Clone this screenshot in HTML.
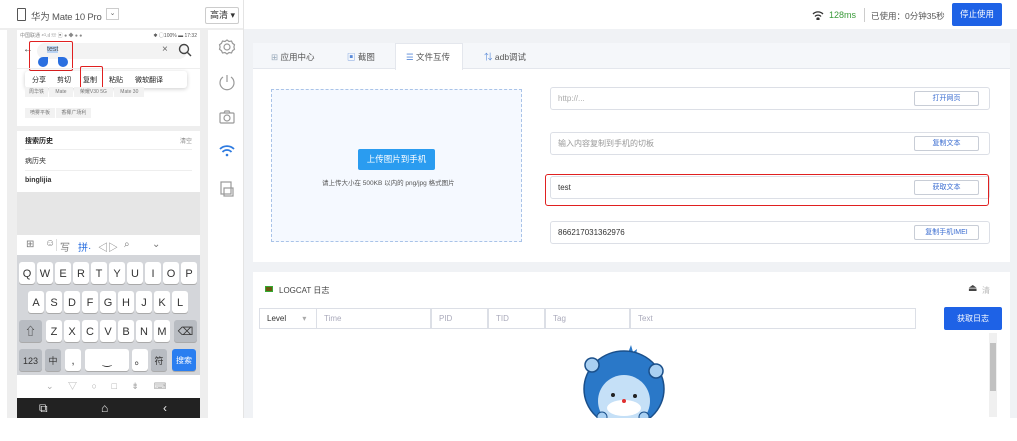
<!DOCTYPE html>
<html><head><meta charset="utf-8"><style>
*{margin:0;padding:0;box-sizing:border-box}
body{width:1017px;height:441px;background:#fff;font-family:"Liberation Sans","Noto Sans CJK SC",sans-serif;position:relative;overflow:hidden;font-size:9px;color:#333}
.a{position:absolute}
.k{position:absolute;background:#fff;border-radius:3px;width:16px;height:22px;text-align:center;line-height:24px;font-size:11px;color:#333;box-shadow:0 1px 0 #aaa}
.kg{background:#b8bcc2}
.inp{position:absolute;left:550px;width:440px;height:23px;border:1px solid #dcdfe6;border-radius:3px;background:#fff;font-size:8px;line-height:21px;padding-left:7px;color:#333}
.inp .b{position:absolute;right:10px;top:3px;width:65px;height:15px;border:1px solid #c8cdd6;border-radius:2px;text-align:center;line-height:13px;font-size:7px;color:#3a6cd0}
.f{position:absolute;top:308px;height:21px;border:1px solid #dcdfe6;background:#fff;font-size:8px;line-height:19px;padding-left:7px;color:#aab}
.m{position:absolute;top:4px;font-size:7px;color:#222}
.t{position:absolute;top:209px;font-size:10px;color:#777}
</style></head><body>
<!-- left header -->
<div class="a" style="left:17px;top:8px;width:9px;height:13px;border:1.5px solid #555;border-radius:1px"></div>
<div class="a" style="left:31px;top:9px;font-size:9.5px;color:#555;letter-spacing:-0.2px">华为 Mate 10 Pro</div>
<div class="a" style="left:106px;top:8px;width:13px;height:12px;border:1px solid #ccc;font-size:7px;text-align:center;line-height:10px;color:#666">⌄</div>
<div class="a" style="left:205px;top:7px;width:34px;height:17px;border:1px solid #ccc;border-radius:2px;font-size:9px;line-height:15px;padding-left:4px;color:#333">高清 ▾</div>
<div class="a" style="left:0;top:28px;width:243px;height:2px;background:#eee"></div>
<div class="a" style="left:7px;top:30px;width:201px;height:388px;background:#eeeeee"></div>
<div class="a" style="left:243px;top:0;width:1px;height:418px;background:#e4e4e4"></div>
<!-- icon column -->
<svg class="a" style="left:218px;top:38px" width="18" height="170" viewBox="0 0 18 170" fill="none" stroke="#999" stroke-width="1.2">
<circle cx="9" cy="9" r="3"/><path d="M9 2l2 1.5 2.5-.5 1 2.3 2 1.4-.6 2.3.6 2.3-2 1.4-1 2.3-2.5-.5L9 16l-2-1.5-2.5.5-1-2.3-2-1.4.6-2.3-.6-2.3 2-1.4 1-2.3 2.5.5z"/>
<path d="M9 37v7M5 39a7 7 0 1 0 8 0"/>
<rect x="2" y="75" width="14" height="10" rx="1"/><circle cx="9" cy="80" r="3"/><path d="M6 75l1-2h4l1 2"/>
<path d="M2 111a10 10 0 0 1 14 0M4.5 114a6 6 0 0 1 9 0" stroke="#2f7be0" stroke-width="1.8"/><circle cx="9" cy="117" r="1.3" fill="#2f7be0" stroke="none"/>
<rect x="3" y="144" width="10" height="12"/><rect x="6" y="150" width="9" height="8"/>
</svg>
<!-- phone -->
<div class="a" style="left:17px;top:30px;width:183px;height:388px;background:#fff;overflow:hidden">
 <div class="a" style="left:3px;top:2px;font-size:5px;color:#888">中国联通 ⁴ᴳ.ıl ☏ ▣ ● ◆ ● ●</div>
 <div class="a" style="right:3px;top:2px;font-size:5px;color:#555">✱ ◯100% ▬ 17:32</div>
 <div class="a" style="left:6px;top:14px;font-size:10px;color:#444">←</div>
 <div class="a" style="left:20px;top:13px;width:150px;height:16px;background:#f3f3f3;border-radius:8px"></div>
 <div class="a" style="left:30px;top:16px;font-size:7px;color:#555;background:#b9d3f3">test</div>
 <div class="a" style="left:145px;top:14px;font-size:10px;color:#666">×</div>
 <svg class="a" style="left:161px;top:13px" width="14" height="14" fill="none" stroke="#444" stroke-width="1.4"><circle cx="6" cy="6" r="4.5"/><path d="M9.5 9.5l3.5 3.5"/></svg>
 <div class="a" style="left:21px;top:27px;width:10px;height:10px;background:#2a6fe0;border-radius:5px 0 5px 5px"></div>
 <div class="a" style="left:41px;top:27px;width:10px;height:10px;background:#2a6fe0;border-radius:0 5px 5px 5px"></div>
 <div class="a" style="left:12px;top:11px;width:44px;height:30px;border:1.5px solid #e02020;border-radius:2px"></div>
 <div class="a" style="left:0;top:38px;width:183px;height:1px;background:#eee"></div>
 <div class="a" style="left:8px;top:41px;width:162px;height:17px;background:#fff;box-shadow:0 1px 4px rgba(0,0,0,.2);border-radius:3px">
  <span class="m" style="left:7px">分享</span><span class="m" style="left:32px">剪切</span><span class="m" style="left:58px">复制</span><span class="m" style="left:84px">粘贴</span><span class="m" style="left:110px">微软翻译</span>
 </div>
 <div class="a" style="left:63px;top:36px;width:23px;height:26px;border:1.5px solid #e02020;border-radius:2px"></div>
 <div class="a" style="left:8px;top:58px;font-size:5px;color:#777"><span style="background:#f2f2f2;padding:2px 4px">周华铁</span> <span style="background:#f2f2f2;padding:2px 6px">Mate</span> <span style="background:#f2f2f2;padding:2px 6px">荣耀V30 5G</span> <span style="background:#f2f2f2;padding:2px 6px">Mate 30</span></div>
 <div class="a" style="left:8px;top:79px;font-size:5px;color:#777"><span style="background:#f2f2f2;padding:2px 5px">喷雾平板</span> <span style="background:#f2f2f2;padding:2px 5px">香椰广场利</span></div>
 <div class="a" style="left:0;top:96px;width:183px;height:5px;background:#eee"></div>
 <div class="a" style="left:8px;top:106px;font-size:7px;font-weight:bold;color:#222">搜索历史</div>
 <div class="a" style="right:8px;top:106px;font-size:6px;color:#888">清空</div>
 <div class="a" style="left:8px;top:119px;width:167px;height:1px;background:#eee"></div>
 <div class="a" style="left:8px;top:126px;font-size:7px;color:#333">病历夹</div>
 <div class="a" style="left:8px;top:140px;width:167px;height:1px;background:#eee"></div>
 <div class="a" style="left:8px;top:147px;font-size:7px;font-weight:bold;color:#333">binglijia</div>
 <div class="a" style="left:0;top:162px;width:183px;height:43px;background:#e6e6e6"></div>
 <div class="a" style="left:0;top:205px;width:183px;height:20px;background:#fff"></div>
 <span class="t" style="left:9px">⊞</span><span class="t" style="left:28px;top:208px">☺</span><span class="t" style="left:43px">写</span><span class="t" style="left:61px;color:#2a6fe0">拼·</span><span class="t" style="left:81px">◁▷</span><span class="t" style="left:107px">⌕</span><span class="t" style="left:135px">⌄</span>
 <div class="a" style="left:39px;top:209px;width:1px;height:12px;background:#ddd"></div>
 <div class="a" style="left:0;top:225px;width:183px;height:120px;background:#d4d6da"></div>
 <div class="a" style="left:0;top:345px;width:183px;height:23px;background:#fff;font-size:9px;color:#aaa;line-height:23px;word-spacing:12px">&nbsp;&nbsp;⌄ ▽ ○ □ ⇟ ⌨</div>
 <div class="a" style="left:0;top:368px;width:183px;height:20px;background:#222;color:#eee;font-size:12px;line-height:20px"><span class="a" style="left:22px">⧉</span><span class="a" style="left:84px">⌂</span><span class="a" style="left:146px">‹</span></div>
</div>
<!-- right top bar -->
<svg class="a" style="left:812px;top:10px" width="12" height="10" fill="none" stroke="#333" stroke-width="1.3"><path d="M1 4a7 7 0 0 1 10 0M3 6.5a4 4 0 0 1 6 0"/><circle cx="6" cy="9" r="1" fill="#333"/></svg>
<div class="a" style="left:829px;top:10px;font-size:9px;color:#3a9a3a">128ms</div>
<div class="a" style="left:864px;top:8px;width:1px;height:14px;background:#ccc"></div>
<div class="a" style="left:871px;top:10px;font-size:8.5px;color:#555">已使用：0分钟35秒</div>
<div class="a" style="left:952px;top:3px;width:50px;height:23px;background:#1e62e6;border-radius:2px;color:#fff;font-size:8.5px;line-height:23px;text-align:center">停止使用</div>
<div class="a" style="left:244px;top:29px;width:773px;height:389px;background:#f0f2f5"></div>
<!-- top card -->
<div class="a" style="left:253px;top:43px;width:757px;height:219px;background:#fff"></div>
<div class="a" style="left:253px;top:43px;width:757px;height:26px;background:#f5f7fa;border-bottom:1px solid #e4e7ed"></div>
<div class="a" style="left:395px;top:43px;width:68px;height:27px;background:#fff;border:1px solid #e4e7ed;border-bottom:none"></div>
<div class="a" style="left:271px;top:51px;font-size:8.5px;color:#555"><span style="color:#9ab">⊞</span> 应用中心</div>
<div class="a" style="left:347px;top:51px;font-size:8.5px;color:#555"><span style="color:#5a8ad8">▣</span> 截图</div>
<div class="a" style="left:406px;top:51px;font-size:8.5px;color:#555"><span style="color:#5a8ad8">☰</span> 文件互传</div>
<div class="a" style="left:484px;top:51px;font-size:8.5px;color:#555"><span style="color:#5a8ad8">⇅</span> adb调试</div>
<div class="a" style="left:271px;top:89px;width:251px;height:153px;border:1px dashed #a9c3e8;background:#f5f9ff"></div>
<div class="a" style="left:358px;top:149px;width:77px;height:21px;background:#2a9cf0;border-radius:2px;color:#fff;font-size:8.5px;line-height:21px;text-align:center">上传图片到手机</div>
<div class="a" style="left:322px;top:177px;font-size:6.5px;color:#555">请上传大小在 500KB 以内的 png/jpg 格式图片</div>
<div class="inp" style="top:87px;color:#aaa">http://...<div class="b">打开网页</div></div>
<div class="inp" style="top:132px;color:#999">输入内容复制到手机的切板<div class="b">复制文本</div></div>
<div class="inp" style="top:176px">test<div class="b">获取文本</div></div>
<div class="a" style="left:545px;top:174px;width:444px;height:32px;border:1.5px solid #e02020;border-radius:3px"></div>
<div class="inp" style="top:221px">866217031362976<div class="b">复制手机IMEI</div></div>
<!-- logcat card -->
<div class="a" style="left:253px;top:272px;width:757px;height:146px;background:#fff"></div>
<div class="a" style="left:265px;top:286px;width:8px;height:6px;background:#6a5a10;border:1px solid #3a3"></div>
<div class="a" style="left:279px;top:285px;font-size:8px;color:#444">LOGCAT 日志</div>
<div class="a" style="left:968px;top:283px;font-size:10px;color:#444">⏏</div>
<div class="a" style="left:982px;top:285px;font-size:8px;color:#bbb">清</div>
<div class="f" style="left:259px;width:58px;color:#333">Level <span style="color:#aaa;margin-left:14px">▾</span></div>
<div class="f" style="left:316px;width:115px">Time</div>
<div class="f" style="left:431px;width:57px">PID</div>
<div class="f" style="left:488px;width:57px">TID</div>
<div class="f" style="left:545px;width:85px">Tag</div>
<div class="f" style="left:630px;width:286px">Text</div>
<div class="a" style="left:944px;top:307px;width:58px;height:23px;background:#1e62e6;border-radius:2px;color:#fff;font-size:8px;line-height:23px;text-align:center">获取日志</div>
<div class="a" style="left:989px;top:333px;width:8px;height:84px;background:#f0f0f0"></div>
<div class="a" style="left:990px;top:343px;width:6px;height:48px;background:#c1c1c1"></div>
<svg class="a" style="left:578px;top:343px" width="92" height="75" viewBox="0 0 92 75">
<path d="M50 10l3-8 2 7 4-3-1 6z" fill="#2a78c8"/>
<ellipse cx="46" cy="46" rx="40" ry="38" fill="#2a78c8" stroke="#1a4f8a" stroke-width="1.5"/>
<circle cx="14" cy="22" r="7" fill="#a9d0f2" stroke="#1a4f8a" stroke-width="1.5"/>
<circle cx="78" cy="28" r="7" fill="#a9d0f2" stroke="#1a4f8a" stroke-width="1.5"/>
<ellipse cx="46" cy="58" rx="26" ry="26" fill="#c5e0f7"/>
<ellipse cx="46" cy="65" rx="17" ry="8" fill="#fff"/>
<circle cx="35" cy="52" r="2" fill="#222"/><circle cx="57" cy="53" r="2" fill="#222"/>
<circle cx="46" cy="58" r="2" fill="#e03030"/>
<circle cx="24" cy="74" r="5" fill="#a9d0f2" stroke="#1a4f8a"/><circle cx="66" cy="74" r="5" fill="#a9d0f2" stroke="#1a4f8a"/>
</svg>
<div class="a" style="left:0;top:418px;width:1017px;height:23px;background:#fff"></div>
<!-- keyboard keys -->
<div class="k" style="left:19px;top:262px">Q</div><div class="k" style="left:37px;top:262px">W</div><div class="k" style="left:55px;top:262px">E</div><div class="k" style="left:73px;top:262px">R</div><div class="k" style="left:91px;top:262px">T</div><div class="k" style="left:109px;top:262px">Y</div><div class="k" style="left:127px;top:262px">U</div><div class="k" style="left:145px;top:262px">I</div><div class="k" style="left:163px;top:262px">O</div><div class="k" style="left:181px;top:262px">P</div>
<div class="k" style="left:28px;top:291px">A</div><div class="k" style="left:46px;top:291px">S</div><div class="k" style="left:64px;top:291px">D</div><div class="k" style="left:82px;top:291px">F</div><div class="k" style="left:100px;top:291px">G</div><div class="k" style="left:118px;top:291px">H</div><div class="k" style="left:136px;top:291px">J</div><div class="k" style="left:154px;top:291px">K</div><div class="k" style="left:172px;top:291px">L</div>
<div class="k kg" style="left:19px;top:320px;width:23px">⇧</div><div class="k" style="left:46px;top:320px">Z</div><div class="k" style="left:64px;top:320px">X</div><div class="k" style="left:82px;top:320px">C</div><div class="k" style="left:100px;top:320px">V</div><div class="k" style="left:118px;top:320px">B</div><div class="k" style="left:136px;top:320px">N</div><div class="k" style="left:154px;top:320px">M</div><div class="k kg" style="left:174px;top:320px;width:23px">⌫</div>
<div class="k kg" style="left:19px;top:349px;width:23px;font-size:9px">123</div><div class="k kg" style="left:45px;top:349px;font-size:9px">中</div><div class="k" style="left:65px;top:349px">,</div><div class="k" style="left:85px;top:349px;width:44px">‿</div><div class="k" style="left:132px;top:349px">。</div><div class="k kg" style="left:151px;top:349px;font-size:9px">符</div><div class="k" style="left:172px;top:349px;width:24px;background:#2a7ef0;color:#fff;font-size:8px">搜索</div>
</body></html>
